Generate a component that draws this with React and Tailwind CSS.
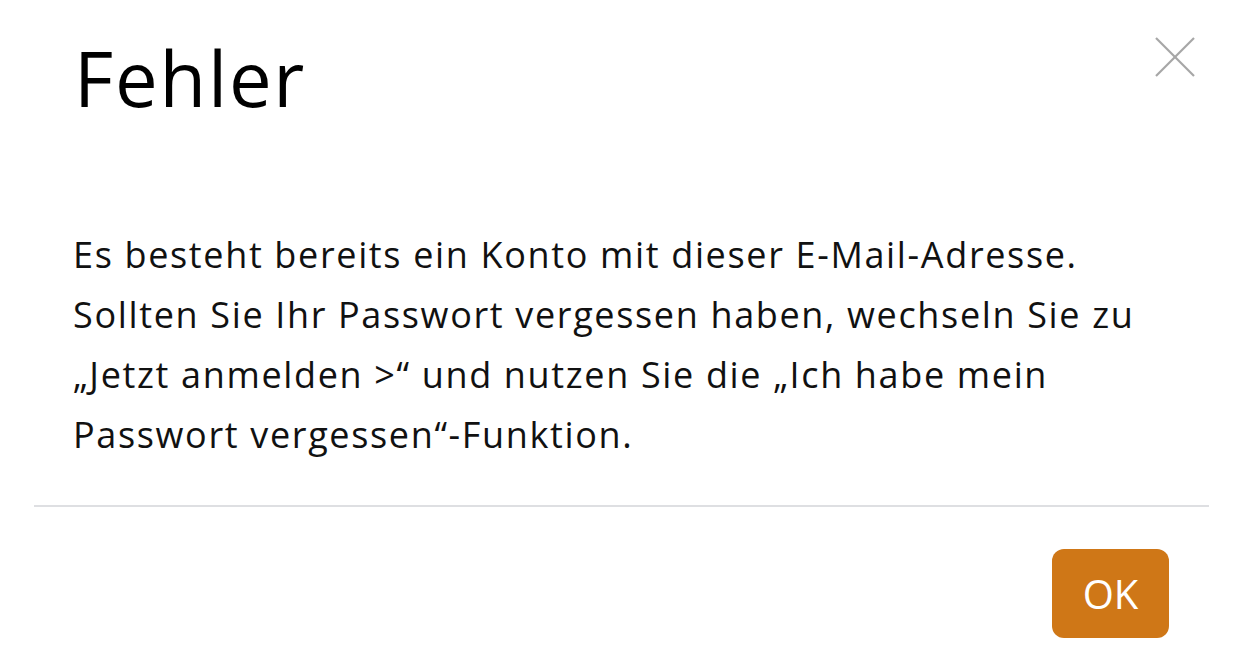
import React from 'react'

const CloseIcon = () => (
    <svg width="40" height="40" viewBox="0 0 40 40" fill="none" stroke="#a6a6a6" strokeWidth="2.2">
        <line x1="1" y1="1" x2="39" y2="39" />
        <line x1="39" y1="1" x2="1" y2="39" />
    </svg>
)

const App = () => {
    return (
        <div className="w-[1240px] h-[669px] bg-white overflow-hidden font-['Open_Sans',sans-serif]">
            <div className="flex justify-between pl-[74px] pr-[45px] pt-[40px]">
                <h1 className="text-[76px] leading-[76px] tracking-[1.8px] text-black font-normal">Fehler</h1>
                <button className="mt-[-3px] h-[40px] w-[40px]">
                    <CloseIcon />
                </button>
            </div>
            <div className="pl-[73px] pr-[40px] pt-[109px] pb-[40px]">
                <p className="text-[36px] leading-[60px] tracking-[1.65px] text-[#111] whitespace-nowrap">
                    Es besteht bereits ein Konto mit dieser E-Mail-Adresse.<br />
                    Sollten Sie Ihr Passwort vergessen haben, wechseln Sie zu<br />
                    „Jetzt anmelden &gt;“ und nutzen Sie die „Ich habe mein<br />
                    Passwort vergessen“-Funktion.
                </p>
            </div>
            <div className="ml-[34px] mr-[31px] border-t-2 border-[#dedfe2]"></div>
            <div className="flex justify-end pr-[71px] pt-[42px]">
                <button className="w-[117px] h-[89px] rounded-[12px] bg-[#cf7717] text-white text-[40px] leading-none">
                    OK
                </button>
            </div>
        </div>
    )
}

export default App
